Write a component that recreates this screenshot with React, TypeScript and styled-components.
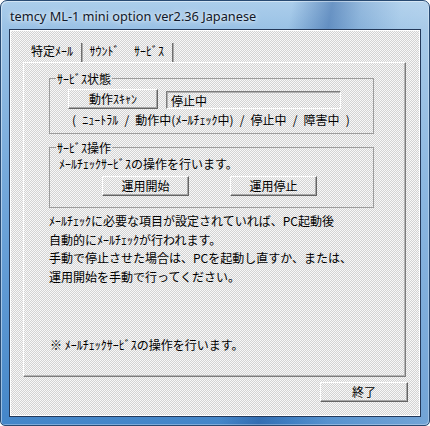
import React from "react";
import styled, { createGlobalStyle, css } from "styled-components";

const GlobalStyle = createGlobalStyle`
  html, body { margin: 0; padding: 0; background: #ffffff; }
  body { width: 430px; height: 426px; overflow: hidden; }
  * { box-sizing: border-box; }
`;

const dither = css`
  background-color: #e8e8e8;
  background-image: repeating-conic-gradient(#d3d3d3 0 25%, #f8f8f8 0 50%);
  background-size: 2px 2px;
`;

const jp = css`
  font-family: "Noto Sans CJK JP", "Noto Sans", sans-serif;
  font-size: 12px;
  line-height: 13px;
  color: #000;
`;

const Window = styled.div`
  width: 430px;
  height: 426px;
  border: 1px solid #284a72;
  border-radius: 7px 7px 5px 5px;
  padding: 0 8px 8px 8px;
  display: flex;
  flex-direction: column;
  background:
    linear-gradient(100deg, rgba(255,255,255,0) 0 58%, rgba(30,80,150,0.45) 66%, rgba(30,80,150,0.15) 72%, rgba(255,255,255,0.1) 80%, rgba(255,255,255,0.25) 100%),
    linear-gradient(180deg, #acceeb 0%, #99c1e5 7%, #72a7da 45%, #4486c9 100%);
  box-shadow: inset 1px 1px 0 rgba(255,255,255,0.45), inset -1px -1px 0 rgba(255,255,255,0.3);
`;

const TitleBar = styled.div`
  height: 28px;
  flex: none;
  display: flex;
  align-items: center;
  padding: 2px 0 0 1px;
`;

const Title = styled.span`
  font-family: "Noto Sans", "Open Sans", sans-serif;
  font-size: 12.75px;
  color: #10182a;
  text-shadow: 0 0 6px rgba(255,255,255,0.9), 0 0 3px rgba(255,255,255,0.7);
`;

const Client = styled.div`
  flex: 1;
  border: 1px solid #24395a;
  box-shadow: inset 1px 1px 0 #ffffff, inset -1px -1px 0 #ffffff;
  ${dither};
  padding: 13px 13px 0 13px;
  display: flex;
  flex-direction: column;
`;

const TabStrip = styled.div`
  height: 19px;
  display: flex;
  align-items: stretch;
`;

const Tab = styled.div<{ $w: number }>`
  ${jp};
  width: ${(p) => p.$w}px;
  padding-top: 1px;
  text-align: center;
`;

const TabSep = styled.div`
  width: 2px;
  border-left: 1px solid #6f6f6f;
  border-right: 1px solid #a9a9a9;
`;

const Panel = styled.div`
  width: 383px;
  height: 315px;
  border-top: 1px solid #ffffff;
  border-left: 1px solid #ffffff;
  border-right: 1px solid #7b7b7b;
  border-bottom: 1px solid #7b7b7b;
  box-shadow: inset -1px -1px 0 #b4b4b4;
  padding: 9px 0 0 25px;
  display: flex;
  flex-direction: column;
`;

const Group = styled.fieldset<{ $mt?: number }>`
  width: 325px;
  min-width: 0;
  margin: ${(p) => p.$mt ?? 0}px 0 0 0;
  padding: 0;
  border: 1px solid #9c9c9c;
`;

const GroupLabel = styled.legend`
  ${jp};
  margin-left: 6px;
  padding: 0 1px;
`;

const GroupBody = styled.div<{ $pad: string }>`
  padding: ${(p) => p.$pad};
  display: flex;
  flex-direction: column;
`;

const Row = styled.div<{ $gap: number; $pl: number; $mt?: number }>`
  display: flex;
  align-items: flex-end;
  gap: ${(p) => p.$gap}px;
  padding-left: ${(p) => p.$pl}px;
  margin-top: ${(p) => p.$mt ?? 0}px;
`;

const Button = styled.div<{ $w: number }>`
  ${jp};
  width: ${(p) => p.$w}px;
  height: 20px;
  border-top: 1px solid #ffffff;
  border-left: 1px solid #ffffff;
  border-right: 1px solid #646464;
  border-bottom: 1px solid #646464;
  box-shadow: inset -1px -1px 0 #a6a6a6;
  display: flex;
  align-items: center;
  justify-content: center;
  padding-bottom: 1px;
`;

const StatusBox = styled.div`
  ${jp};
  width: 175px;
  height: 18px;
  border-top: 1px solid #7c7c7c;
  border-left: 1px solid #7c7c7c;
  border-right: 1px solid #ffffff;
  border-bottom: 1px solid #ffffff;
  box-shadow: inset 1px 1px 0 #b0b0b0;
  padding: 2px 0 0 4px;
`;

const Text = styled.div<{ $pl?: number; $mt?: number; $ws?: number }>`
  ${jp};
  padding-left: ${(p) => p.$pl ?? 0}px;
  margin-top: ${(p) => p.$mt ?? 0}px;
  word-spacing: ${(p) => p.$ws ?? 0}px;
  white-space: pre;
`;

const Paragraph = styled.div`
  ${jp};
  line-height: 18.7px;
  margin-top: 4px;
  white-space: pre;
`;

const Note = styled.div`
  ${jp};
  margin: 51px 0 0 1px;
`;

const Footer = styled.div`
  display: flex;
  justify-content: flex-end;
  margin: 5px -1px 0 0;
`;

export default function App() {
  return (
    <>
      <GlobalStyle />
      <Window>
        <TitleBar>
          <Title>temcy ML-1 mini option ver2.36 Japanese</Title>
        </TitleBar>
        <Client>
          <TabStrip>
            <Tab $w={58}>特定ﾒｰﾙ</Tab>
            <TabSep />
            <Tab $w={43}>ｻｳﾝﾄﾞ</Tab>
            <Tab $w={46}>ｻｰﾋﾞｽ</Tab>
            <TabSep />
          </TabStrip>
          <Panel>
            <Group>
              <GroupLabel>ｻｰﾋﾞｽ状態</GroupLabel>
              <GroupBody $pad="4px 0 7px 0">
                <Row $gap={8} $pl={18}>
                  <Button $w={90}>動作ｽｷｬﾝ</Button>
                  <StatusBox>停止中</StatusBox>
                </Row>
                <Text $pl={22} $mt={4} $ws={3.5}>( ﾆｭｰﾄﾗﾙ / 動作中(ﾒｰﾙﾁｪｯｸ中) / 停止中 / 障害中 )</Text>
              </GroupBody>
            </Group>
            <Group $mt={7}>
              <GroupLabel>ｻｰﾋﾞｽ操作</GroupLabel>
              <GroupBody $pad="3px 0 11px 0">
                <Text $pl={9}>ﾒｰﾙﾁｪｯｸｻｰﾋﾞｽの操作を行います。</Text>
                <Row $gap={41} $pl={52} $mt={6}>
                  <Button $w={87}>運用開始</Button>
                  <Button $w={87}>運用停止</Button>
                </Row>
              </GroupBody>
            </Group>
            <Paragraph>
              {"ﾒｰﾙﾁｪｯｸに必要な項目が設定されていれば、PC起動後\n自動的にﾒｰﾙﾁｪｯｸが行われます。\n手動で停止させた場合は、PCを起動し直すか、または、\n運用開始を手動で行ってください。"}
            </Paragraph>
            <Note>※ ﾒｰﾙﾁｪｯｸｻｰﾋﾞｽの操作を行います。</Note>
          </Panel>
          <Footer>
            <Button $w={88}>終了</Button>
          </Footer>
        </Client>
      </Window>
    </>
  );
}
